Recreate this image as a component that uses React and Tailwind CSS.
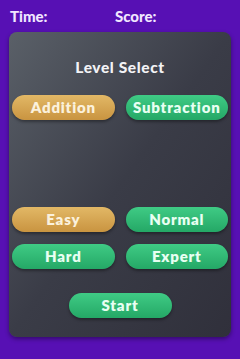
export default function App() {
  const font = { fontFamily: "Lato, 'DejaVu Sans', sans-serif" };
  const gold = "bg-gradient-to-b from-[#e2b866] to-[#c99440] text-[#fbf1dc]";
  const green = "bg-gradient-to-b from-[#3fcb85] to-[#24a866] text-[#e8fff2]";
  const btn = "h-[25px] rounded-full flex items-center justify-center text-[15px] font-extrabold tracking-[0.8px] shadow-[0_2px_3px_rgba(0,0,0,0.35)]";
  return (
    <div className="w-[240px] h-[359px] bg-[#5710b4] flex flex-col" style={font}>
      <div className="flex h-[32px] items-center pl-[10px] text-[15px] font-black text-[#f1e6ff]">
        <span className="w-[105px]">Time:</span>
        <span>Score:</span>
      </div>
      <div className="mx-[9px] h-[305px] rounded-[8px] bg-gradient-to-br from-[#5a6068] via-[#3a3c47] to-[#30303b] shadow-[0_2px_4px_rgba(0,0,0,0.4)] flex flex-col px-[3px]">
        <div className="h-[63px] flex items-start justify-center pt-[27px] text-[15.5px] leading-[16px] font-black tracking-[0.6px] text-[#f3f3f6]">Level Select</div>
        <div className="grid grid-cols-2 gap-x-[11px]">
          <div className={`${btn} ${gold}`}>Addition</div>
          <div className={`${btn} ${green}`}>Subtraction</div>
        </div>
        <div className="h-[87px]" />
        <div className="grid grid-cols-2 gap-x-[11px] gap-y-[12px]">
          <div className={`${btn} ${gold}`}>Easy</div>
          <div className={`${btn} ${green}`}>Normal</div>
          <div className={`${btn} ${green}`}>Hard</div>
          <div className={`${btn} ${green}`}>Expert</div>
        </div>
        <div className="flex justify-center mt-[24px]">
          <div className={`${btn} ${green} w-[103px]`}>Start</div>
        </div>
      </div>
    </div>
  );
}
